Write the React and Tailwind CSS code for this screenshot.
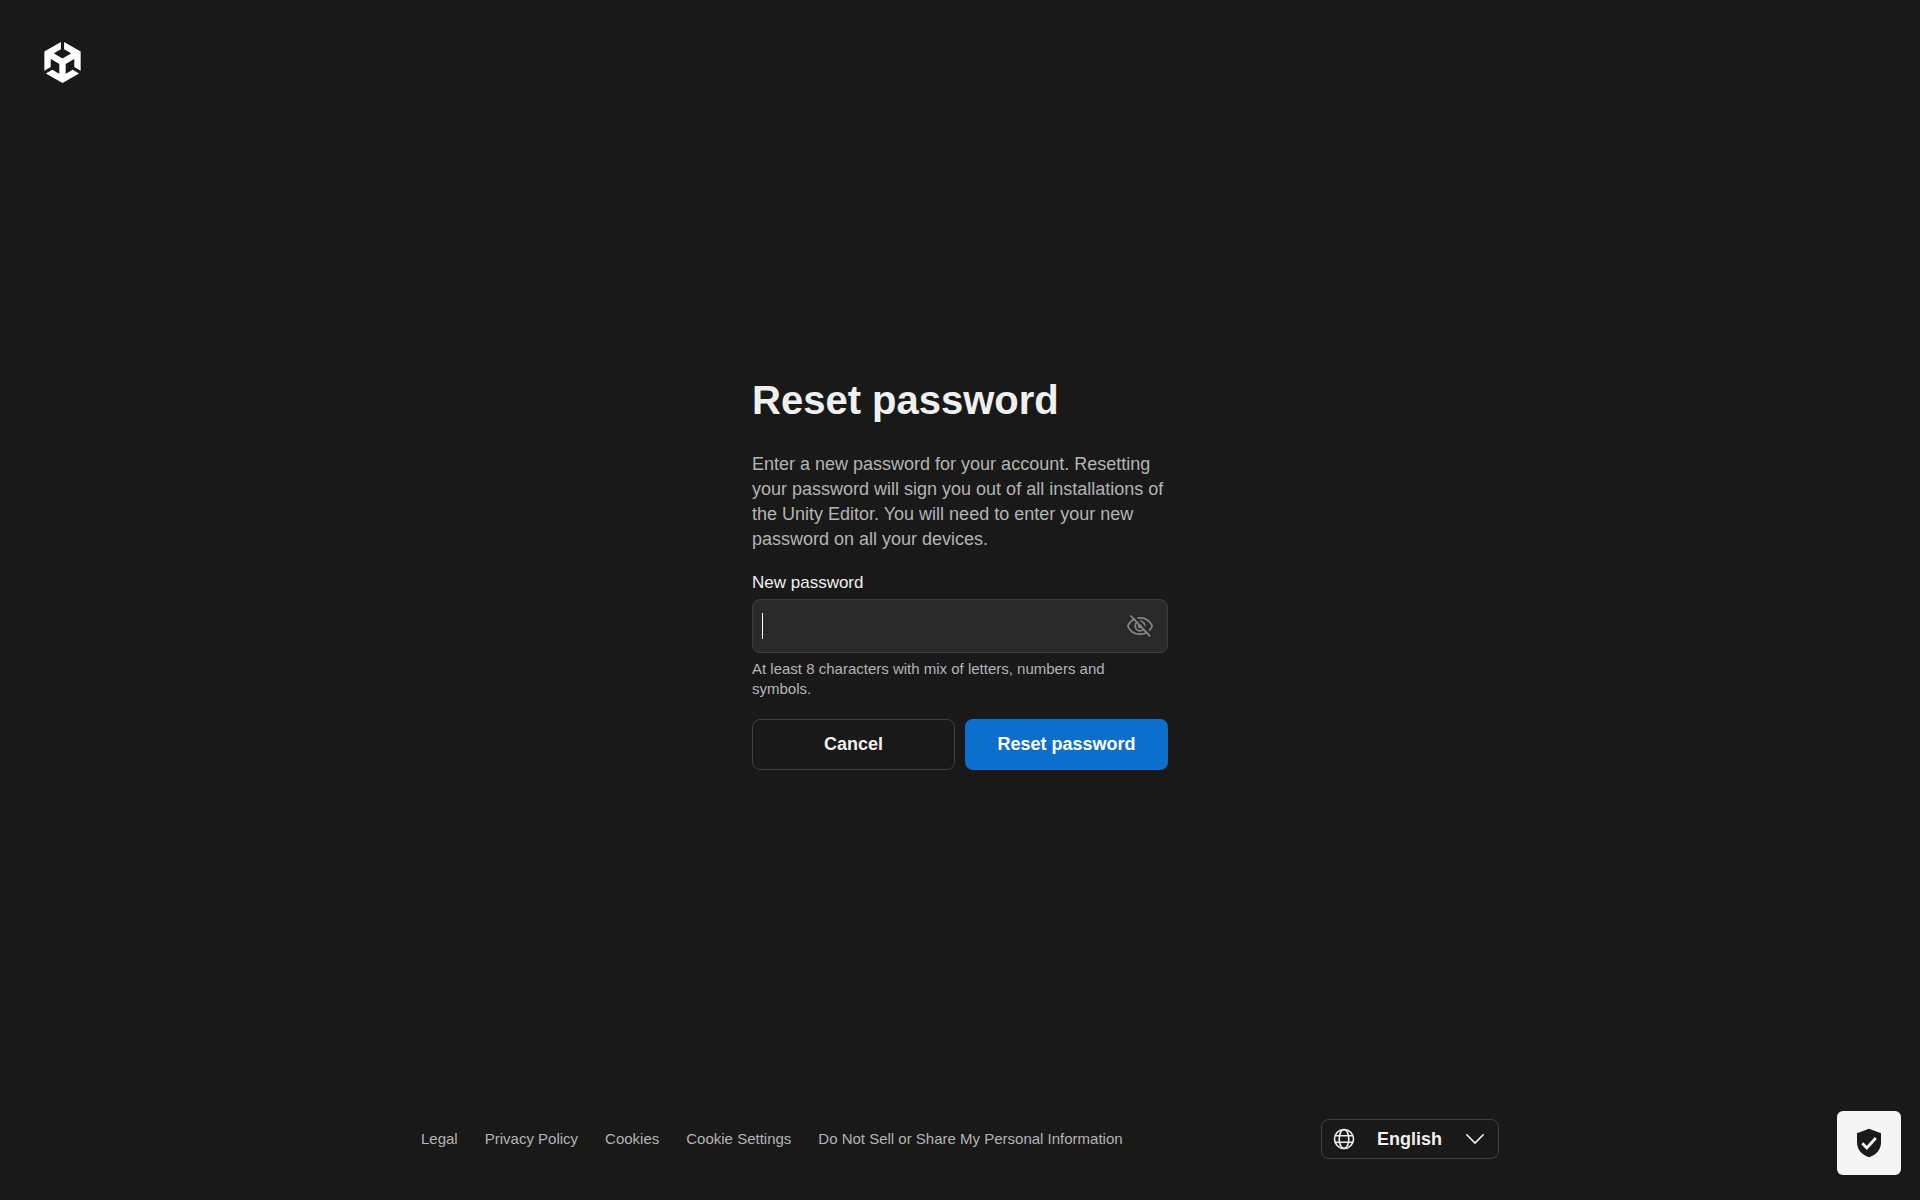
import { useState } from "react";
import { SiUnity } from "react-icons/si";

const footerLinks = [
  "Legal",
  "Privacy Policy",
  "Cookies",
  "Cookie Settings",
  "Do Not Sell or Share My Personal Information",
];

function EyeIcon({ crossed }) {
  return (
    <svg viewBox="0 0 28 28" className="size-7" fill="none" stroke="currentColor" strokeWidth="1.8" strokeLinecap="round" aria-hidden="true">
      <mask id="eye-slash">
        <rect width="28" height="28" fill="white" stroke="none" />
        {crossed && <path d="M6.6 2.6 25.4 22.4" stroke="black" strokeWidth="2.2" />}
      </mask>
      <g mask="url(#eye-slash)">
        <path d="M1.8 14C4.2 8.200 9 5.800 14 5.800S23.800 8.200 26.200 14C23.800 19.800 19 22.200 14 22.200S4.200 19.800 1.800 14Z" />
        <circle cx="14" cy="14" r="4.800" />
        <circle cx="14" cy="14" r="1.300" />
      </g>
      {crossed && <path d="M5 4 23.600 23.800" />}
    </svg>
  );
}

function GlobeIcon() {
  return (
    <svg viewBox="0 0 22 22" className="size-[22px]" fill="none" stroke="currentColor" strokeWidth="1.6" aria-hidden="true">
      <circle cx="11" cy="11" r="9.5" />
      <ellipse cx="11" cy="11" rx="4.8" ry="9.5" />
      <path d="M2 7.700h18M2 14.300h18" />
    </svg>
  );
}

function ShieldIcon() {
  return (
    <svg viewBox="0 0 26 30" className="h-[30px] w-[26px]" aria-hidden="true">
      <path d="M13 .7 25 5.200v9.300c0 7-5 12.600-12 14.800C6 27.100 1 21.500 1 14.500V5.200Z" fill="#1a1a1a" />
      <path d="m6.300 15.300 4.500 4.600 9-9.900" fill="none" stroke="#f5f5f5" strokeWidth="2.800" />
    </svg>
  );
}

export default function App() {
  const [password, setPassword] = useState("");
  const [hidden, setHidden] = useState(true);

  return (
    <div className="flex min-h-screen flex-col bg-[#191919] font-['Liberation_Sans',Arial,sans-serif] text-[#f0f0f0]">
      <header className="px-[42px] pt-[42px]">
        <a href="#" aria-label="Unity" className="block w-fit text-white">
          <SiUnity className="size-[41px]" />
        </a>
      </header>

      <main className="flex flex-1 items-center justify-center">
        <form className="w-full max-w-[416px]" onSubmit={(e) => e.preventDefault()}>
          <h1 className="text-[40px] leading-12 font-bold">Reset password</h1>
          <p className="mt-7 text-[18px] leading-[25px] text-[#b4b4b4]">
            Enter a new password for your account. Resetting your password will sign you out of all installations of
            the Unity Editor. You will need to enter your new password on all your devices.
          </p>
          <label htmlFor="password" className="mt-[19px] block text-[17px] leading-6">
            New password
          </label>
          <div className="relative mt-1">
            <input
              id="password"
              type={hidden ? "password" : "text"}
              value={password}
              onChange={(e) => setPassword(e.target.value)}
              aria-describedby="password-hint"
              className="block h-[54px] w-full rounded-lg border border-[#3c3c3c] bg-[#292929] pr-12 pl-2.5 text-[18px] caret-transparent outline-none"
            />
            {password === "" && <span className="pointer-events-none absolute top-3.5 left-2.5 h-[26px] w-px bg-white" />}
            <button
              type="button"
              aria-label={hidden ? "Show password" : "Hide password"}
              onClick={() => setHidden(!hidden)}
              className="absolute inset-y-0 right-3.5 text-[#858585]"
            >
              <EyeIcon crossed={hidden} />
            </button>
          </div>
          <p id="password-hint" className="mt-1.5 pr-8 text-[15px] leading-5 text-[#b4b4b4]">
            At least 8 characters with mix of letters, numbers and symbols.
          </p>
          <div className="mt-5 grid grid-cols-2 gap-2.5 text-[18px] font-bold">
            <button type="button" className="h-[51px] rounded-lg border border-[#404040]">
              Cancel
            </button>
            <button type="submit" className="h-[51px] rounded-lg bg-[#0b6fcb] text-white">
              Reset password
            </button>
          </div>
        </form>
      </main>

      <footer className="mx-auto flex w-full max-w-[1078px] items-center justify-between pt-14 pb-[41px]">
        <nav className="flex gap-[27px] text-[15px] text-[#b4b4b4]">
          {footerLinks.map((label) => (
            <a key={label} href="#">
              {label}
            </a>
          ))}
        </nav>
        <div className="relative">
          <select
            aria-label="Language"
            className="h-10 w-[178px] appearance-none rounded-lg border border-[#404040] bg-[#191919] pl-[55px] text-[18px] font-bold"
          >
            <option>English</option>
          </select>
          <span className="pointer-events-none absolute inset-y-0 left-3 flex items-center">
            <GlobeIcon />
          </span>
          <span className="pointer-events-none absolute inset-y-0 right-3.5 flex items-center">
            <svg viewBox="0 0 20 12" className="h-3 w-5" fill="none" stroke="currentColor" strokeWidth="1.6" strokeLinecap="round" aria-hidden="true">
              <path d="m1.800 1.800 8.200 8.200 8.200-8.200" />
            </svg>
          </span>
        </div>
      </footer>

      <button
        type="button"
        aria-label="Privacy settings"
        className="fixed right-[19px] bottom-[25px] flex size-16 items-center justify-center rounded-md bg-[#f5f5f5]"
      >
        <ShieldIcon />
      </button>
    </div>
  );
}
